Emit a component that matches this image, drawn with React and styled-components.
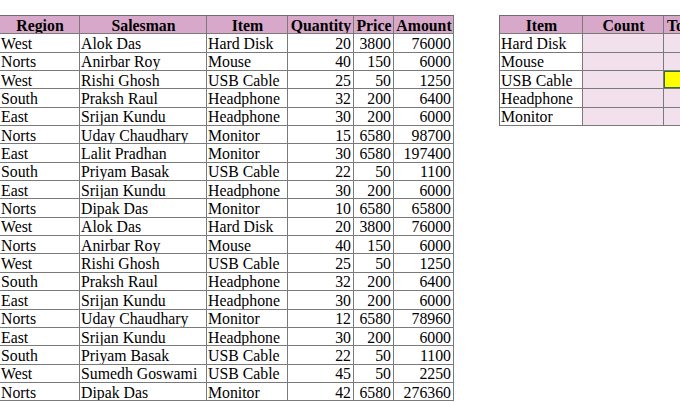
import React from "react";
import styled, { createGlobalStyle } from "styled-components";

const Global = createGlobalStyle`
  html, body { margin: 0; padding: 0; background: #fff; overflow: hidden; }
  body { font-family: "Liberation Serif", "Times New Roman", serif; color: #000; }
`;

const Page = styled.div`
  display: flex;
  align-items: flex-start;
  gap: 45px;
  padding-top: 15px;
  width: 900px;
`;

const Grid = styled.div`
  display: grid;
  grid-template-columns: ${(p) => p.$cols};
  grid-auto-rows: 18.35px;
  border-top: 1px solid #6e6e6e;
  border-left: ${(p) => (p.$noLeft ? "none" : "1px solid #6e6e6e")};
`;

const Cell = styled.div`
  box-sizing: border-box;
  border-right: 1px solid #7a7a7a;
  border-bottom: 1px solid #7a7a7a;
  background: ${(p) => (p.$head ? "#d7a8ca" : p.$pink ? "#f2e0ec" : "#fff")};
  font-size: 15.8px;
  font-weight: ${(p) => (p.$head ? 700 : 400)};
  line-height: 18px;
  white-space: nowrap;
  overflow: hidden;
  display: flex;
  align-items: center;
  justify-content: ${(p) => (p.$head ? "center" : p.$num ? "flex-end" : "flex-start")};
  padding: 2px ${(p) => (p.$num ? "2px" : "0")} 0 ${(p) => (p.$num ? "0" : "1px")};
  position: relative;
`;

const Selected = styled.div`
  position: absolute;
  inset: -1px -1px -1px -1px;
  background: #ffff00;
  border: 2px solid #2c6e3f;
`;

const rows = [
  ["West", "Alok Das", "Hard Disk", 20, 3800, 76000],
  ["Norts", "Anirbar Roy", "Mouse", 40, 150, 6000],
  ["West", "Rishi Ghosh", "USB Cable", 25, 50, 1250],
  ["South", "Praksh Raul", "Headphone", 32, 200, 6400],
  ["East", "Srijan Kundu", "Headphone", 30, 200, 6000],
  ["Norts", "Uday Chaudhary", "Monitor", 15, 6580, 98700],
  ["East", "Lalit Pradhan", "Monitor", 30, 6580, 197400],
  ["South", "Priyam Basak", "USB Cable", 22, 50, 1100],
  ["East", "Srijan Kundu", "Headphone", 30, 200, 6000],
  ["Norts", "Dipak Das", "Monitor", 10, 6580, 65800],
  ["West", "Alok Das", "Hard Disk", 20, 3800, 76000],
  ["Norts", "Anirbar Roy", "Mouse", 40, 150, 6000],
  ["West", "Rishi Ghosh", "USB Cable", 25, 50, 1250],
  ["South", "Praksh Raul", "Headphone", 32, 200, 6400],
  ["East", "Srijan Kundu", "Headphone", 30, 200, 6000],
  ["Norts", "Uday Chaudhary", "Monitor", 12, 6580, 78960],
  ["East", "Srijan Kundu", "Headphone", 30, 200, 6000],
  ["South", "Priyam Basak", "USB Cable", 22, 50, 1100],
  ["West", "Sumedh Goswami", "USB Cable", 45, 50, 2250],
  ["Norts", "Dipak Das", "Monitor", 42, 6580, 276360],
];

const heads = ["Region", "Salesman", "Item", "Quantity", "Price", "Amount"];
const items = ["Hard Disk", "Mouse", "USB Cable", "Headphone", "Monitor"];

export default function App() {
  return (
    <>
      <Global />
      <Page>
        <Grid $noLeft $cols="80px 127px 81px 66px 40px 60px">
          {heads.map((h) => (
            <Cell key={h} $head>{h}</Cell>
          ))}
          {rows.map((r, i) =>
            r.map((v, j) => (
              <Cell key={i + "-" + j} $num={j >= 3}>
                {v}
              </Cell>
            ))
          )}
        </Grid>
        <Grid $cols="83px 81px 99px">
          <Cell $head>Item</Cell>
          <Cell $head>Count</Cell>
          <Cell $head>Total Amount</Cell>
          {items.map((it, i) => (
            <React.Fragment key={it}>
              <Cell>{it}</Cell>
              <Cell $pink />
              <Cell $pink>{i === 2 && <Selected />}</Cell>
            </React.Fragment>
          ))}
        </Grid>
      </Page>
    </>
  );
}
